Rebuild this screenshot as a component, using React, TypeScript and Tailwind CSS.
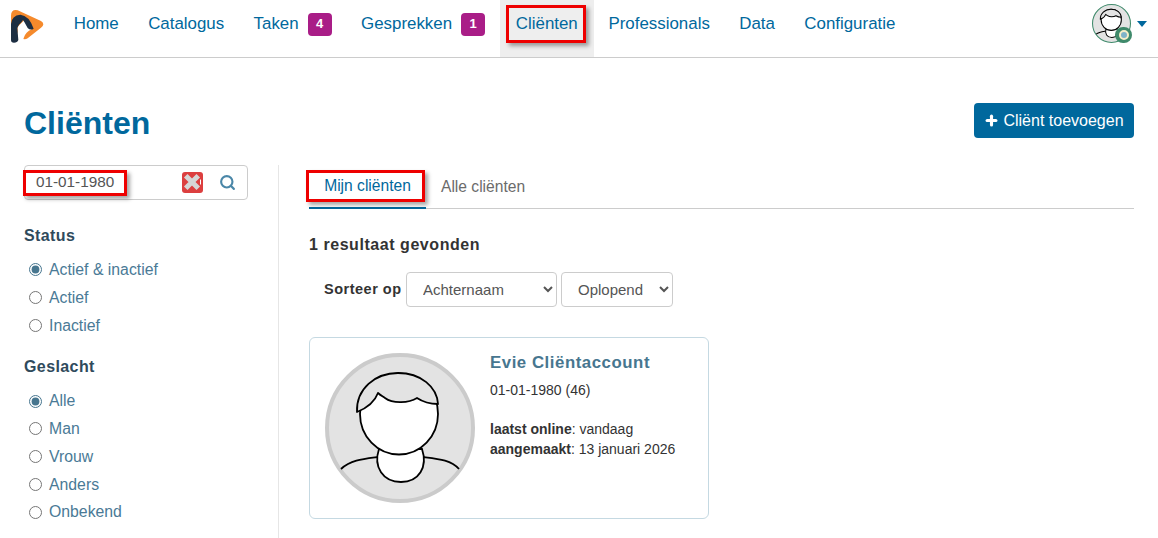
import { Plus, Search } from 'lucide-react';

const navItems = [
  { label: 'Home' },
  { label: 'Catalogus' },
  { label: 'Taken', badge: 4 },
  { label: 'Gesprekken', badge: 1 },
  { label: 'Cliënten', active: true },
  { label: 'Professionals' },
  { label: 'Data' },
  { label: 'Configuratie' },
];

function Person({ ring, line, className }: { ring: string; line: number; className?: string }) {
  return (
    <svg viewBox="0 0 150 150" className={className}>
      <circle cx="75" cy="75" r="73" fill="#e3e3e3" stroke={ring} strokeWidth="4" />
      <path d="M16 116 C26 107 38 106 53 104 M98 104 C114 106 126 107 134 116" fill="none" stroke="#000" strokeWidth={line} />
      <path d="M54 96 C48 114 58 129 76 129 C94 129 103 114 97 96 Z" fill="#fff" stroke="#000" strokeWidth={line} />
      <ellipse cx="74" cy="61" rx="39" ry="40.5" fill="#fff" stroke="#000" strokeWidth={line} />
      <path d="M32 59 C31 36 50 20 73 20 C96 20 112 34 113 51 C106 51 98 49 92 45 C84 50 68 51 60 45 C57 43 55 42 53 40 C50 48 42 55 32 59 Z" fill="#e3e3e3" stroke="#000" strokeWidth={line} strokeLinejoin="round" />
    </svg>
  );
}

function Radio({ name, label, checked }: { name: string; label: string; checked?: boolean }) {
  return (
    <label className="flex h-[27.75px] items-center gap-[7px] pl-[5px] text-[15.8px] text-[#4a7a96]">
      <input type="radio" name={name} defaultChecked={checked} className="m-0 h-[13px] w-[13px] accent-[#47768f]" />
      {label}
    </label>
  );
}

function RedMark({ className }: { className: string }) {
  return <div className={`pointer-events-none absolute border-[3px] border-[#ee0000] shadow-[3px_3px_4px_rgba(0,0,0,0.35)] ${className}`} />;
}

export default function App() {
  return (
    <div className="relative h-[538px] w-[1158px] overflow-hidden bg-white font-['Liberation_Sans',Arial,sans-serif] text-[#333]">
      {/* navigatie */}
      <header className="flex h-[58px] items-stretch border-b border-[#cccccc] pl-[10px] pr-[10px]">
        <svg viewBox="15 8 105 105" className="mt-[8px] h-[35px] w-[35px] shrink-0">
          <path d="M18 32 Q18 11 38 15 L108 47 Q122 56 108 67 L68 99 Q56 107 48 94 L18 60 Z" fill="#f58a2c" />
          <path d="M38 114 L38 64 L56 46 L80 72 Q62 80 56 98 L52 114 Z" fill="#fff" />
          <path d="M18 56 Q20 30 46 28 Q72 30 86 70 Q76 76 68 68 L58 50 L54 44 L50 50 L42 58 L37 68 L40 104 Q37 112 27 112 Q18 112 18 104 Z" fill="#1c2e42" />
        </svg>
        <nav className="ml-[14px] flex items-stretch text-[16.9px] text-[#00689d]">
          {navItems.map((item) => (
            <a key={item.label} className={`flex items-center gap-[9px] pb-[9px] ${item.active ? 'bg-[#eeeeee] px-[16px]' : 'px-[14.7px]'}`}>
              {item.label}
              {item.badge && (
                <span className="flex h-[23px] w-[24px] items-center justify-center rounded-[4px] bg-[#a91d87] text-[13px] font-bold text-white">{item.badge}</span>
              )}
            </a>
          ))}
        </nav>
        <div className="ml-auto flex items-center gap-[6px] pb-[10px] pr-[1px]">
          <div className="relative h-[39px] w-[39px]">
            <Person ring="#3f8a6b" line={4} className="h-full w-full" />
            <span className="absolute bottom-0 right-[-1px] flex h-[16px] w-[17px] items-center justify-center rounded-full bg-[#3f8a6b]">
              <span className="h-[10px] w-[10px] rounded-full border-2 border-[#f5eec8] bg-[#7fb3c8]" />
            </span>
          </div>
          <span className="h-0 w-0 border-x-[5.5px] border-t-[6px] border-x-transparent border-t-[#00689d]" />
        </div>
      </header>

      {/* titel */}
      <div className="flex h-[107px] items-center justify-between px-[24px] pt-[23px]">
        <h1 className="text-[32px] font-bold text-[#00689d]">Cliënten</h1>
        <button className="mt-[-5px] flex h-[35px] w-[160px] items-center justify-center gap-[4px] rounded-[4px] bg-[#00689d] text-[16px] text-white">
          <Plus size={15} strokeWidth={5} />
          Cliënt toevoegen
        </button>
      </div>

      <div className="flex">
        {/* filters */}
        <aside className="h-[373px] w-[279px] shrink-0 border-r border-[#e6e6e6] pl-[24px] pr-[30px]">
          <div className="flex h-[35px] items-center rounded-[4px] border border-[#cccccc] pl-[11px] pr-[11px]">
            <span className="text-[15.3px] text-[#555]">01-01-1980</span>
            <svg viewBox="0 0 21 21" className="ml-auto h-[21px] w-[21px]">
              <rect width="21" height="21" rx="3" fill="#dc3f3f" />
              <path d="M5.5 5.5 L14.5 14.5 M14.5 5.5 L5.5 14.5" stroke="#d6d6d6" strokeWidth="5" strokeLinecap="square" />
              <path d="M18.5 7.5 V12.5" stroke="#fff" strokeWidth="1" />
            </svg>
            <Search size={17} strokeWidth={3} className="ml-[16px] text-[#4a87a8]" />
          </div>
          <h2 className="mt-[26px] text-[16px] font-bold leading-[20px] tracking-[0.4px] text-[#2f4a5c]">Status</h2>
          <div className="mt-[10px]">
            <Radio name="status" label="Actief & inactief" checked />
            <Radio name="status" label="Actief" />
            <Radio name="status" label="Inactief" />
          </div>
          <h2 className="mt-[18px] text-[16px] font-bold leading-[20px] tracking-[0.4px] text-[#2f4a5c]">Geslacht</h2>
          <div className="mt-[10px]">
            <Radio name="geslacht" label="Alle" checked />
            <Radio name="geslacht" label="Man" />
            <Radio name="geslacht" label="Vrouw" />
            <Radio name="geslacht" label="Anders" />
            <Radio name="geslacht" label="Onbekend" />
          </div>
        </aside>

        {/* resultaten */}
        <main className="min-w-0 flex-1 pl-[30px] pr-[24px]">
          <div className="flex h-[44px] items-stretch border-b border-[#cccccc] text-[15.6px]">
            <span className="mb-[-1px] flex w-[117px] items-center justify-center border-b-2 border-[#00689d] text-[#00689d]">Mijn cliënten</span>
            <span className="flex items-center pl-[15px] text-[#6b6b6b]">Alle cliënten</span>
          </div>
          <p className="mt-[26px] text-[16px] font-bold leading-[20px] tracking-[0.55px]">1 resultaat gevonden</p>
          <div className="mt-[17px] flex items-center gap-[4px] pl-[15px]">
            <span className="w-[78px] whitespace-nowrap text-[14.5px] font-bold tracking-[0.5px]">Sorteer op</span>
            <select className="h-[35px] w-[151px] rounded-[4px] border border-[#cccccc] pl-[12px] text-[15px] text-[#555]">
              <option>Achternaam</option>
            </select>
            <select className="h-[35px] w-[112px] rounded-[4px] border border-[#cccccc] pl-[12px] text-[15px] text-[#555]">
              <option>Oplopend</option>
            </select>
          </div>
          <div className="mt-[30px] flex h-[182px] w-[400px] rounded-[6px] border border-[#c5d9e2] pl-[15px] pt-[15px]">
            <Person ring="#cbcbcb" line={1.8} className="h-[150px] w-[150px] shrink-0" />
            <div className="ml-[15px]">
              <p className="text-[16.8px] font-bold leading-[20px] tracking-[0.55px] text-[#47768f]">Evie Cliëntaccount</p>
              <p className="mt-[7px] text-[14px] leading-[20px]">01-01-1980 (46)</p>
              <p className="mt-[19px] text-[14px] leading-[20px]"><b>laatst online</b>: vandaag</p>
              <p className="text-[14px] leading-[20px]"><b>aangemaakt</b>: 13 januari 2026</p>
            </div>
          </div>
        </main>
      </div>

      {/* rode markeringen */}
      <RedMark className="left-[506px] top-[5px] h-[38px] w-[80px]" />
      <RedMark className="left-[23px] top-[170px] h-[26px] w-[104px]" />
      <RedMark className="left-[306px] top-[170px] h-[32px] w-[119px]" />
    </div>
  );
}
